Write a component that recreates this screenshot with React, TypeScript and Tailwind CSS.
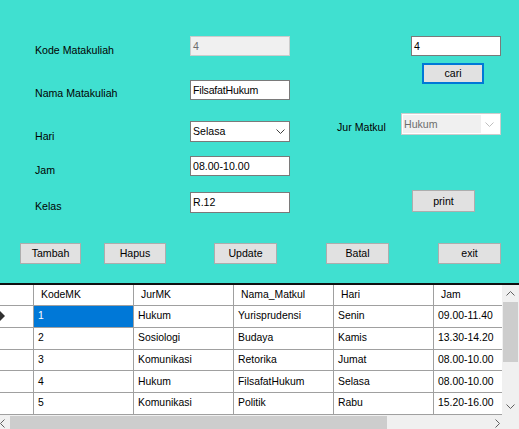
import React from "react";

const Chevron = ({ color }: { color: string }) => (
  <svg width="9" height="5" viewBox="0 0 9 5" className="block">
    <path d="M0.5 0.5 L4.5 4.5 L8.5 0.5" fill="none" stroke={color} strokeWidth="1" />
  </svg>
);

const rows = [
  ["1", "Hukum", "Yurisprudensi", "Senin", "09.00-11.40"],
  ["2", "Sosiologi", "Budaya", "Kamis", "13.30-14.20"],
  ["3", "Komunikasi", "Retorika", "Jumat", "08.00-10.00"],
  ["4", "Hukum", "FilsafatHukum", "Selasa", "08.00-10.00"],
  ["5", "Komunikasi", "Politik", "Rabu", "15.20-16.00"],
];

const Btn = ({ label, cls, focused }: { label: string; cls: string; focused?: boolean }) => (
  <div
    className={`flex items-center justify-center bg-[#e1e1e1] ${
      focused ? "border-2 border-[#0078d7]" : "border border-[#adadad]"
    } ${cls}`}
  >
    {label}
  </div>
);

export default function App() {
  return (
    <div className="w-[519px] h-[429px] overflow-hidden bg-[#40E0D0] font-['Liberation_Sans',Arial,sans-serif] text-[10.6px] text-black leading-none">
      {/* form area */}
      <div className="h-[283px] flex flex-col">
        <div className="flex h-[243px]">
          {/* labels */}
          <div className="ml-[35px] w-[155px] flex flex-col">
            <div className="mt-[43px] h-[14px] leading-[14px]">Kode Matakuliah</div>
            <div className="mt-[29px] h-[14px] leading-[14px]">Nama Matakuliah</div>
            <div className="mt-[29px] h-[14px] leading-[14px]">Hari</div>
            <div className="mt-[20px] h-[14px] leading-[14px]">Jam</div>
            <div className="mt-[22px] h-[14px] leading-[14px]">Kelas</div>
          </div>
          {/* inputs */}
          <div className="w-[100px] flex flex-col">
            <div className="mt-[36px] h-[20px] border border-[#cccccc] bg-[#f0f0f0] flex items-center pl-[2px] text-[#6d6d6d]">
              4
            </div>
            <div className="mt-[24px] h-[20px] border border-[#7a7a7a] bg-white flex items-center pl-[2px] tracking-[-0.2px]">
              FilsafatHukum
            </div>
            <div className="mt-[21px] h-[21px] border border-[#7a7a7a] bg-white flex items-center pl-[2px] pr-[4px] justify-between">
              <span>Selasa</span>
              <Chevron color="#404040" />
            </div>
            <div className="mt-[14px] h-[20px] border border-[#7a7a7a] bg-white flex items-center pl-[2px]">
              08.00-10.00
            </div>
            <div className="mt-[16px] h-[21px] border border-[#7a7a7a] bg-white flex items-center pl-[2px]">
              R.12
            </div>
          </div>
          {/* Jur label */}
          <div className="ml-[47px] w-[64px] flex flex-col">
            <div className="mt-[120px] h-[14px] leading-[14px]">Jur Matkul</div>
          </div>
          {/* right column */}
          <div className="w-[100px] flex flex-col">
            <div className="ml-[10px] w-[90px] mt-[36px] h-[20px] border border-[#7a7a7a] bg-white flex items-center pl-[2px]">
              4
            </div>
            <Btn label="cari" focused cls="ml-[21px] w-[62px] mt-[7px] h-[21px]" />
            <div className="mt-[29px] h-[22px] border border-[#cccccc] bg-white flex items-center p-[1px] pr-[6px]">
              <div className="w-[78px] h-full bg-[#f0f0f0] flex items-center pl-[1px] text-[#6d6d6d]">
                Hukum
              </div>
              <div className="flex-1 flex justify-end">
                <Chevron color="#bfbfbf" />
              </div>
            </div>
            <Btn label="print" cls="ml-[11px] w-[63px] mt-[55px] h-[22px]" />
          </div>
        </div>
        {/* buttons row */}
        <div className="flex">
          <Btn label="Tambah" cls="ml-[20px] w-[61px] h-[21px]" />
          <Btn label="Hapus" cls="ml-[23px] w-[62px] h-[21px]" />
          <Btn label="Update" cls="ml-[48px] w-[63px] h-[21px]" />
          <Btn label="Batal" cls="ml-[49px] w-[63px] h-[21px]" />
          <Btn label="exit" cls="ml-[49px] w-[63px] h-[21px]" />
        </div>
      </div>

      {/* data grid */}
      <div className="border-t-2 border-[#101010] bg-white flex flex-col text-[10.4px]">
        <div className="flex h-[130px]">
          <div className="w-[506px] flex flex-col">
            {/* header */}
            <div className="flex h-[21px] border-b border-[#a0a0a0]">
              <div className="w-[34px] border-r border-[#a0a0a0]" />
              {["KodeMK", "JurMK", "Nama_Matkul", "Hari"].map((h) => (
                <div key={h} className="w-[100px] border-r border-[#a0a0a0] flex items-center pl-[7px]">
                  {h}
                </div>
              ))}
              <div className="flex-1 flex items-center pl-[7px]">Jam</div>
            </div>
            {rows.map((r, i) => (
              <div key={i} className="flex h-[22px] border-b border-[#a0a0a0]">
                <div className="w-[34px] border-r border-[#a0a0a0] flex items-center">
                  {i === 0 && (
                    <svg width="6" height="10" viewBox="0 0 6 10" className="block">
                      <path d="M0 0 L5 5 L0 10 Z" fill="#303030" />
                    </svg>
                  )}
                </div>
                {r.slice(0, 4).map((c, j) => (
                  <div
                    key={j}
                    className={`w-[100px] border-r border-[#a0a0a0] flex items-center pl-[4px] ${
                      i === 0 && j === 0 ? "bg-[#0078d7] text-white" : ""
                    }`}
                  >
                    {c}
                  </div>
                ))}
                <div className="flex-1 flex items-center pl-[4px]">{r[4]}</div>
              </div>
            ))}
          </div>
          {/* vertical scrollbar */}
          <div className="w-[17px] bg-[#f0f0f0] flex flex-col items-center">
            <div className="h-[17px] flex items-center justify-center">
              <svg width="9" height="5" viewBox="0 0 9 5" className="block">
                <path d="M0.5 4.5 L4.5 0.5 L8.5 4.5" fill="none" stroke="#606060" strokeWidth="1" />
              </svg>
            </div>
            <div className="w-[15px] h-[60px] bg-[#cdcdcd]" />
            <div className="flex-1" />
            <div className="h-[17px] flex items-center justify-center">
              <Chevron color="#606060" />
            </div>
          </div>
        </div>
        {/* horizontal scrollbar */}
        <div className="flex h-[17px]">
          <div className="w-[506px] bg-[#f0f0f0] flex items-center">
            <div className="w-[10px] flex items-center">
              <svg width="5" height="9" viewBox="0 0 5 9" className="block">
                <path d="M4.5 0.5 L0.5 4.5 L4.5 8.5" fill="none" stroke="#606060" strokeWidth="1" />
              </svg>
            </div>
            <div className="w-[377px] h-[15px] bg-[#cdcdcd]" />
            <div className="flex-1" />
            <div className="w-[17px] flex items-center justify-center">
              <svg width="5" height="9" viewBox="0 0 5 9" className="block">
                <path d="M0.5 0.5 L4.5 4.5 L0.5 8.5" fill="none" stroke="#606060" strokeWidth="1" />
              </svg>
            </div>
          </div>
          <div className="flex-1 bg-[#f0f0f0]" />
        </div>
      </div>
    </div>
  );
}
